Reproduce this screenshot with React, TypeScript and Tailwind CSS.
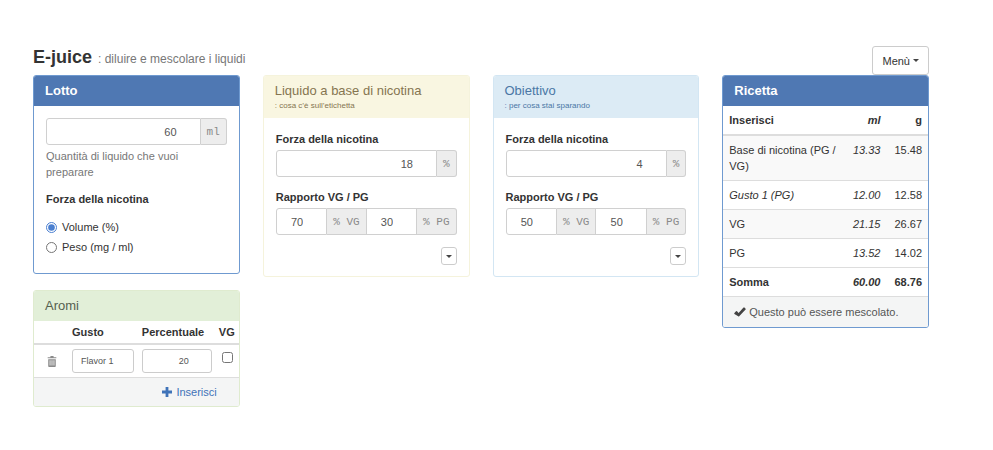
import type { ReactNode } from "react";

const tones = {
  primary: { border: "border-[#6f9ad0]", head: "bg-[#4f78b3] text-white font-bold" },
  success: { border: "border-[#dfebcf]", head: "bg-[#e2efd8] text-[#55604f]" },
  warning: { border: "border-[#f5f3dc]", head: "bg-[#f9f6e1] text-[#857550]" },
  info: { border: "border-[#d3e6f3]", head: "bg-[#dcebf5] text-[#4a77a5]" },
};

type PanelProps = {
  title: string;
  subtitle?: string;
  tone: keyof typeof tones;
  children: ReactNode;
};

function Panel({ title, subtitle, tone, children }: PanelProps) {
  return (
    <section className={`overflow-hidden rounded-[3px] border bg-white ${tones[tone].border}`}>
      <header className={`px-[11px] py-[6px] ${tones[tone].head}`}>
        <h2 className="text-[13px] leading-[18px]">{title}</h2>
        {subtitle && <p className="text-[8px] leading-[12px]">{subtitle}</p>}
      </header>
      {children}
    </section>
  );
}

function Unit({ children, last }: { children: ReactNode; last?: boolean }) {
  return (
    <span
      className={`flex items-center whitespace-pre border-y border-r border-[#d0d0d0] bg-[#ededed] px-[6px] font-['Liberation_Mono',monospace] text-[11px] text-[#8a8a8a] ${last ? "rounded-r-[3px]" : ""}`}
    >
      {children}
    </span>
  );
}

type FieldProps = { id: string; value: string; label?: string; first?: boolean };

function Field({ id, value, label, first }: FieldProps) {
  return (
    <input
      id={id}
      aria-label={label}
      defaultValue={value}
      inputMode="numeric"
      className={`h-[27px] w-0 min-w-0 flex-1 border-y border-r border-[#d0d0d0] bg-white pr-[23px] text-right text-[11px] text-[#555] ${first ? "rounded-l-[3px] border-l" : ""}`}
    />
  );
}

type LiquidProps = {
  id: string;
  title: string;
  subtitle: string;
  tone: "warning" | "info";
  strength: string;
  vg: string;
  pg: string;
};

function LiquidPanel({ id, title, subtitle, tone, strength, vg, pg }: LiquidProps) {
  return (
    <Panel title={title} subtitle={subtitle} tone={tone}>
      <div className="px-3 pt-[13px] pb-[11px]">
        <label htmlFor={`${id}-strength`} className="mb-[3px] block font-bold">
          Forza della nicotina
        </label>
        <div className="mb-3 flex">
          <Field id={`${id}-strength`} value={strength} first />
          <Unit last>%</Unit>
        </div>
        <label htmlFor={`${id}-vg`} className="mb-[3px] block font-bold">
          Rapporto VG / PG
        </label>
        <div className="flex">
          <Field id={`${id}-vg`} value={vg} first />
          <Unit>% VG</Unit>
          <Field id={`${id}-pg`} value={pg} label="PG" />
          <Unit last>% PG</Unit>
        </div>
        <div className="mt-3 flex justify-end">
          <button
            type="button"
            aria-label={title}
            className="flex h-[18px] w-4 items-center justify-center rounded-[3px] border border-[#ccc] bg-white"
          >
            <Caret />
          </button>
        </div>
      </div>
    </Panel>
  );
}

function Caret() {
  return (
    <svg viewBox="0 0 6 3" className="h-[3px] w-[6px] fill-[#444]">
      <path d="M0 0h6L3 3z" />
    </svg>
  );
}

const recipe = [
  { name: "Base di nicotina (PG / VG)", ml: "13.33", g: "15.48" },
  { name: "Gusto 1 (PG)", ml: "12.00", g: "12.58", italic: true },
  { name: "VG", ml: "21.15", g: "26.67" },
  { name: "PG", ml: "13.52", g: "14.02" },
];

export default function App() {
  return (
    <main className="bg-white pt-[46px] pr-16 pb-8 pl-[33px] font-['Liberation_Sans',Arial,sans-serif] text-[11px] leading-4 text-[#333]">
      <div className="flex items-start justify-between">
        <h1 className="text-[18px] leading-[23px] font-bold">
          E-juice <small className="ml-px text-[12px] font-normal text-[#777]">: diluire e mescolare i liquidi</small>
        </h1>
        <button
          type="button"
          className="flex h-[29px] items-center gap-[3px] rounded-[3px] border border-[#ccc] bg-white px-[9px]"
        >
          Menù <Caret />
        </button>
      </div>

      <div className="grid grid-cols-4 items-start gap-[23px]">
        <div className="flex flex-col gap-4">
          <Panel title="Lotto" tone="primary">
            <div className="px-3 pt-3 pb-4">
              <div className="flex">
                <Field id="batch" value="60" label="Quantità" first />
                <Unit last>ml</Unit>
              </div>
              <p className="mt-[3px] mb-[11px] pr-6 text-[#777]">Quantità di liquido che vuoi preparare</p>
              <fieldset>
                <legend className="mb-[10px] font-bold">Forza della nicotina</legend>
                <label className="flex h-5 items-center gap-[5px]">
                  <input type="radio" name="unit" defaultChecked className="size-[11px] accent-[#4a7fd0]" />
                  Volume (%)
                </label>
                <label className="flex h-5 items-center gap-[5px]">
                  <input type="radio" name="unit" className="size-[11px]" />
                  Peso (mg / ml)
                </label>
              </fieldset>
            </div>
          </Panel>

          <Panel title="Aromi" tone="success">
            <table className="w-full">
              <thead>
                <tr className="border-b-2 border-[#ddd] text-left">
                  <th className="w-[34px]" />
                  <th className="py-[3px] pl-1">Gusto</th>
                  <th className="py-[3px] pl-2">Percentuale</th>
                  <th className="py-[3px] pr-1 pl-[7px]">VG</th>
                </tr>
              </thead>
              <tbody>
                <tr>
                  <td className="pl-[13px]">
                    <button type="button" aria-label="Elimina" className="block">
                      <svg viewBox="0 0 12 14" className="h-[11px] w-[10px]" fill="#8a8a8a">
                        <path
                          d="M4 0h4v1.500h3.500V3H.5V1.500H4zM1.200 4h9.600v9a1 1 0 0 1-1 1H2.200a1 1 0 0 1-1-1zM3 5.500v6.500h1V5.500zm2.500 0v6.500h1V5.500zm2.500 0v6.500h1V5.500z"
                          fillRule="evenodd"
                        />
                      </svg>
                    </button>
                  </td>
                  <td className="py-1 pl-1">
                    <input
                      aria-label="Gusto"
                      defaultValue="Flavor 1"
                      className="block h-6 w-full rounded-[3px] border border-[#ccc] px-2 text-[9px] text-[#555]"
                    />
                  </td>
                  <td className="py-1 pl-2">
                    <input
                      aria-label="Percentuale"
                      defaultValue="20"
                      className="block h-6 w-[70px] rounded-[3px] border border-[#ccc] pr-[22px] text-right text-[9px] text-[#555]"
                    />
                  </td>
                  <td className="pt-[7px] pl-[10px] align-top">
                    <input type="checkbox" aria-label="VG" className="block size-[11px]" />
                  </td>
                </tr>
              </tbody>
            </table>
            <footer className="flex justify-end border-t border-[#ddd] bg-[#f4f5f5] py-[6px] pr-[22px]">
              <button type="button" className="flex items-center gap-1 text-[#3f73b8]">
                <svg viewBox="0 0 10 10" className="size-[10px]" fill="currentColor">
                  <path d="M3.600 0h2.800v3.600H10v2.800H6.400V10H3.600V6.400H0V3.600h3.600z" />
                </svg>
                Inserisci
              </button>
            </footer>
          </Panel>
        </div>

        <LiquidPanel
          id="base"
          title="Liquido a base di nicotina"
          subtitle=": cosa c’è sull’etichetta"
          tone="warning"
          strength="18"
          vg="70"
          pg="30"
        />
        <LiquidPanel
          id="target"
          title="Obiettivo"
          subtitle=": per cosa stai sparando"
          tone="info"
          strength="4"
          vg="50"
          pg="50"
        />

        <Panel title="Ricetta" tone="primary">
          <table className="w-full">
            <thead>
              <tr className="border-b-2 border-[#ddd]">
                <th className="px-[6px] py-[6px] text-left">Inserisci</th>
                <th className="px-[6px] py-[6px] text-right italic">ml</th>
                <th className="py-[6px] pr-[6px] pl-2 text-right">g</th>
              </tr>
            </thead>
            <tbody>
              {recipe.map((row) => (
                <tr key={row.name} className="border-b border-[#ddd] align-top odd:bg-[#f9f9f9]">
                  <td className={`px-[6px] py-[6px] ${row.italic ? "italic" : ""}`}>{row.name}</td>
                  <td className="px-[6px] py-[6px] text-right italic">{row.ml}</td>
                  <td className="py-[6px] pr-[6px] pl-2 text-right">{row.g}</td>
                </tr>
              ))}
            </tbody>
            <tfoot>
              <tr className="border-b border-[#ddd]">
                <th className="px-[6px] py-[6px] text-left">Somma</th>
                <th className="px-[6px] py-[6px] text-right italic">60.00</th>
                <th className="py-[6px] pr-[6px] pl-2 text-right">68.76</th>
              </tr>
            </tfoot>
          </table>
          <footer className="flex items-center gap-[3px] bg-[#f4f5f5] px-[11px] py-[7px] text-[#555]">
            <svg viewBox="0 0 12 10" className="h-[10px] w-3" fill="#444">
              <path d="M.4 5.900 2 4.300Q2.500 3.900 3 4.300L4.600 5.900 9.500.6Q10 .2 10.500.6L11.600 1.700Q12 2.100 11.600 2.600L5.200 9.300Q4.700 9.700 4.200 9.300L.4 6.900Q0 6.400.4 5.900z" />
            </svg>
            Questo può essere mescolato.
          </footer>
        </Panel>
      </div>
    </main>
  );
}
